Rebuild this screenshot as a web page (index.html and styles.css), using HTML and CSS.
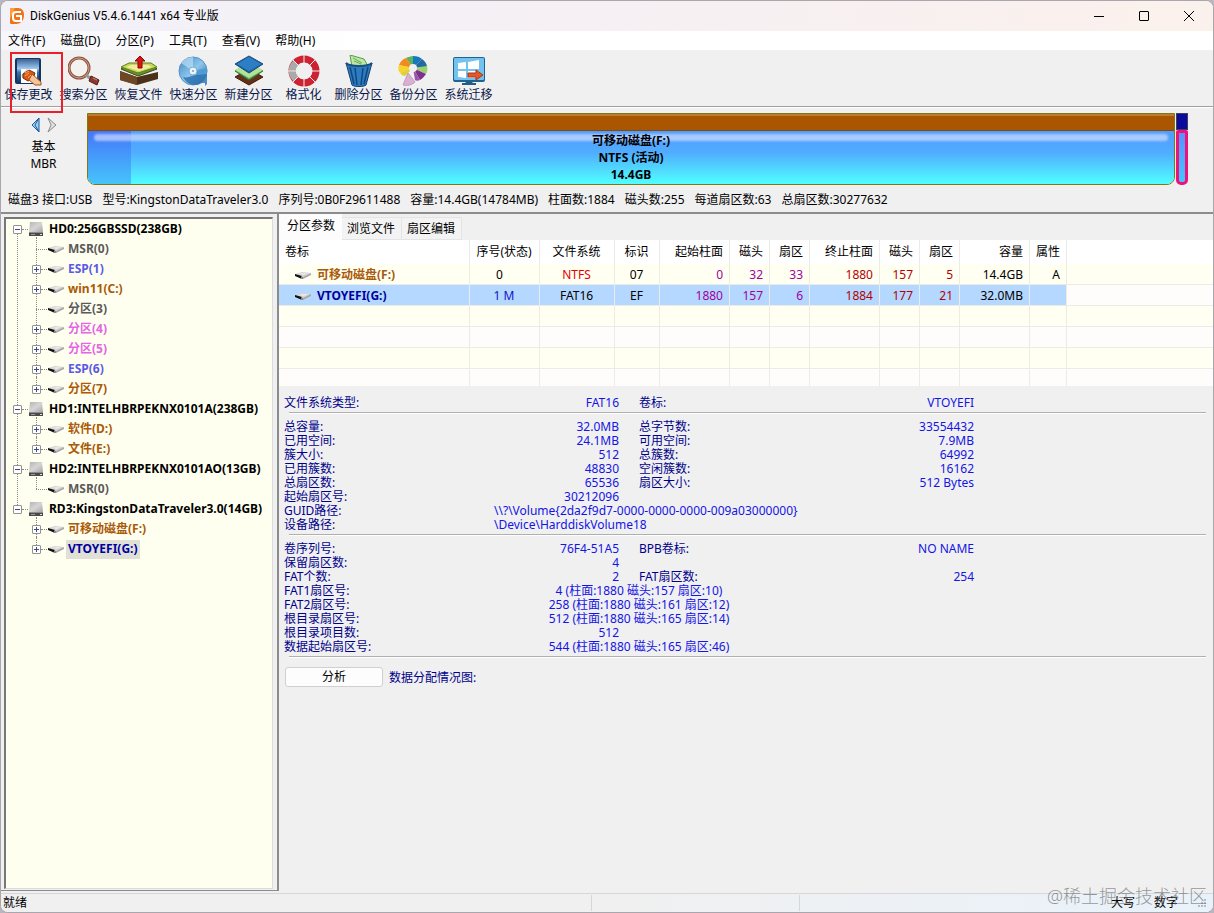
FILE: index.html
```html
<!DOCTYPE html>
<html lang="zh-CN">
<head>
  <meta charset="UTF-8" />
  <meta name="viewport" content="width=device-width, initial-scale=1" />
  <title>DiskGenius V5.4.6.1441 x64 专业版</title>
  <link rel="stylesheet" href="styles.css">
</head>
<body>
  <!-- shared icons -->
  <svg class="sprite" aria-hidden="true">
    <defs>
      <linearGradient id="metal" x1="0" y1="0" x2="1" y2="1">
        <stop offset="0" stop-color="#b4b4b4" />
        <stop offset="0.5" stop-color="#d6d6d6" />
        <stop offset="1" stop-color="#a6a6a6" />
      </linearGradient>
    </defs>
    <symbol id="disk" viewBox="0 0 16 16">
      <path d="M2 1h12l1 10H1z" fill="url(#metal)" />
      <path d="M1 11h14v4H1z" fill="#4a4a4a" />
      <path d="M1 11h14v1H1z" fill="#8c8c8c" />
      <path d="M3 13h4v1H3z" fill="#999" />
      <path d="M12 13h2v1h-2z" fill="#ddd" />
    </symbol>
    <symbol id="part" viewBox="0 0 18 10">
      <path d="M1 4l7-2 9 1-7 4z" fill="#d4d4d4" />
      <path d="M9 7l8-4v2l-8 4z" fill="#a8a8a8" />
      <path d="M1 4l7 2v3L1 6z" fill="#111" />
      <path d="M7 6l2 1v2H7z" fill="#8a8a8a" />
      <path d="M4 4l5-1 5 0-4 2z" fill="#e9e9e9" />
    </symbol>
  </svg>

  <div class="window">
    <header class="titlebar">
      <svg class="logo" viewBox="0 0 16 18">
        <path d="M1 1h8c4 0 6 3 6 7 0 5-3 9-8 9H2c-1 0-1-1-1-2z" fill="#f47216" />
        <path d="M1 1h5L1 12z" fill="#ff9c3e" />
        <path d="M12 5H7C5 5 4 6 4 8v3c0 2 1 3 3 3h5V9H7" fill="none" stroke="#fff" stroke-width="2" />
      </svg>
      <h1>DiskGenius V5.4.6.1441 x64 专业版</h1>
      <div class="window-buttons">
        <button aria-label="最小化"><svg viewBox="0 0 10 10"><path d="M0 5.5h10" /></svg></button>
        <button aria-label="最大化"><svg viewBox="0 0 10 10"><rect x="0.5" y="0.5" width="9" height="9" rx="0.5" /></svg></button>
        <button aria-label="关闭"><svg viewBox="0 0 10 10"><path d="M0 0l10 10M10 0L0 10" /></svg></button>
      </div>
    </header>

    <nav class="menubar">
      <button>文件(F)</button>
      <button>磁盘(D)</button>
      <button>分区(P)</button>
      <button>工具(T)</button>
      <button>查看(V)</button>
      <button>帮助(H)</button>
    </nav>

    <div class="toolbar">
      <button class="tool marked">
        <svg viewBox="0 0 32 32">
          <defs><linearGradient id="save" x1="0" y1="0" x2="0" y2="1"><stop offset="0" stop-color="#3b6196" /><stop offset="0.4" stop-color="#9cc8f0" /><stop offset="0.55" stop-color="#3d74b0" /><stop offset="1" stop-color="#0c3562" /></linearGradient></defs>
          <rect x="2" y="3" width="26" height="26" rx="2" fill="#12365f" />
          <rect x="4" y="4" width="22" height="24" fill="url(#save)" />
          <path d="M8 14h16v14H8z" fill="#fff" />
          <path d="M8 20l6-6 3 3-7 7z" fill="#c8d4e0" />
          <path d="M10 19l6-4 6 3-2 6-5 2-5-3z" fill="#d85a14" stroke="#7c2a06" />
          <path d="M19 19l9 8v3h-6l-6-5z" fill="#f6c496" stroke="#a2501e" />
          <path d="M12 18l4-2M12 21l4-3M15 23l3-3" stroke="#ffa664" />
        </svg>
        <span>保存更改</span>
      </button>
      <button class="tool">
        <svg viewBox="0 0 32 32">
          <circle cx="11" cy="13" r="10" fill="#f6f3ef" fill-opacity="0.6" stroke="#8f5443" stroke-width="3" />
          <circle cx="11" cy="13" r="10" fill="none" stroke="#cf9c88" />
          <path d="M18 20l5 4" stroke="#999" stroke-width="3" />
          <path d="M23 21l8 4-2 5-8-4z" fill="#8c3b2b" stroke="#4e1b13" />
          <path d="M25 23l4 2" stroke="#cf8877" />
        </svg>
        <span>搜索分区</span>
      </button>
      <button class="tool">
        <svg class="wide" viewBox="0 0 40 32">
          <path d="M1 16l17 6 21-5v7l-21 6-17-5z" fill="#4c2f18" />
          <path d="M1 16l17 6v8L1 25z" fill="#6d4726" />
          <path d="M2 14l8-5h22l6 5-19 7z" fill="#6b8e2c" stroke="#34520f" />
          <path d="M2 12l8-4h22l6 4-19 6z" fill="#c3d958" stroke="#5e7e1c" />
          <path d="M7 12l5-2h17l4 2-13 4z" fill="#f3eba2" />
          <path d="M19 13V6h-3l5-5 5 5h-3v7z" fill="#dd1414" stroke="#8e0606" />
        </svg>
        <span>恢复文件</span>
      </button>
      <button class="tool">
        <svg viewBox="0 0 32 32">
          <defs><linearGradient id="cd" x1="0" y1="0" x2="1" y2="1"><stop offset="0" stop-color="#3f86c2" /><stop offset="0.5" stop-color="#8dc6ec" /><stop offset="1" stop-color="#2768a6" /></linearGradient></defs>
          <circle cx="15" cy="16" r="14" fill="url(#cd)" stroke="#5a94c4" />
          <path d="M15 16L3 8C6 4 10 2 15 2z" fill="#b9def4" opacity="0.7" />
          <path d="M15 16l14-3c1 5-1 10-5 13z" fill="#4f9ad0" />
          <circle cx="15" cy="16" r="4" fill="#e9f3fa" stroke="#81acd0" />
          <circle cx="15" cy="16" r="1" fill="#6aa5d2" />
          <path d="M5 22c6 2 11-3 16-2l8-1v10l-2 2v-3h-3c-6 4-15 2-19-6z" fill="#2b72b0" opacity="0.8" />
        </svg>
        <span>快速分区</span>
      </button>
      <button class="tool">
        <svg viewBox="0 0 32 32">
          <path d="M2 22l14-8 14 8-14 8z" fill="#653018" stroke="#441b0b" />
          <path d="M2 16l14-8 14 8-14 9z" fill="#5da967" stroke="#2c7337" />
          <path d="M2 15l14-8 14 8-14 8z" fill="#b3e494" />
          <path d="M2 9l14-8 14 8-14 9z" fill="#1e63a5" stroke="#194a82" />
          <path d="M4 9l12-7 12 7-12 7z" fill="#2c7fc4" />
        </svg>
        <span>新建分区</span>
      </button>
      <button class="tool">
        <svg viewBox="0 0 32 32">
          <circle cx="16" cy="16" r="12" fill="none" stroke="#cc2231" stroke-width="7" />
          <path d="M4 16A12 12 0 0 1 8 8M4 16A12 12 0 0 0 8 24" fill="none" stroke="#aaa" stroke-width="7" />
          <path d="M16 0v32M0 16h32M4 4l24 24M28 4L4 28" stroke="#f0f0f0" stroke-width="1" />
          <circle cx="16" cy="16" r="8" fill="#f0f0f0" />
        </svg>
        <span>格式化</span>
      </button>
      <button class="tool">
        <svg viewBox="0 0 32 32">
          <path d="M7 0l14 4 4 7-16 1z" fill="#bce8a3" stroke="#559c4b" />
          <path d="M10 3l9 5M11 6l7 3" stroke="#6aa95c" />
          <path d="M3 8c4 4 22 4 26 0l-6 22c-2 2-12 2-14 0z" fill="#2d7cc2" stroke="#11406e" />
          <path d="M7 12l4 17M12 13l2 17M20 13l-2 17M25 12l-4 17" stroke="#12477c" stroke-width="1.5" />
          <path d="M3 8c4 4 22 4 26 0" fill="none" stroke="#194f83" stroke-width="2" />
        </svg>
        <span>删除分区</span>
      </button>
      <button class="tool">
        <svg viewBox="0 0 32 32">
          <path d="M15 13L8 3c2-1 5-2 7-2z" fill="#5cb35c" />
          <path d="M15 13V1c4 0 7 1 9 3z" fill="#1579bd" />
          <path d="M15 13l9-9c3 2 5 5 5 8z" fill="#2468a4" />
          <path d="M15 13l14-2c1 3 0 6-1 8z" fill="#9bd16d" />
          <path d="M15 13l13 6c-2 3-4 5-6 6z" fill="#7e308f" />
          <path d="M15 13l7 12c-2 1-4 1-5 0z" fill="#9a55a6" />
          <path d="M15 13L8 3C5 4 2 7 1 10z" fill="#f38a1e" />
          <path d="M15 13L1 10c-1 3-1 5 1 8z" fill="#f5d52a" />
          <path d="M15 13L2 18c2 2 3 3 5 3z" fill="#dfcf35" />
          <circle cx="15" cy="13" r="4" fill="#f0f0f0" />
          <path d="M10 18l7 9c-3 3-8 4-12 3z" fill="#d9b0d2" stroke="#c49abd" />
        </svg>
        <span>备份分区</span>
      </button>
      <button class="tool">
        <svg viewBox="0 0 32 32">
          <rect x="0" y="2" width="32" height="25" rx="2" fill="#1f6292" />
          <rect x="1" y="3" width="30" height="22" rx="1" fill="#72c3ef" />
          <path d="M5 8l8-1v7H5zM15 7l11-2v9H15zM5 16h8v7l-8-1zM15 16h11v7H15z" fill="#fff" />
          <path d="M13 27h6l1 1h3v2H9v-2h3z" fill="#245c84" />
          <path d="M15 18h8v-3l7 5-7 5v-3h-8z" fill="#e4582b" stroke="#b03514" />
        </svg>
        <span>系统迁移</span>
      </button>
    </div>

    <section class="disk-panel">
      <div class="disk-map">
        <div class="disk-nav">
          <div class="arrows">
            <button aria-label="上一个磁盘"><svg viewBox="0 0 10 16"><path d="M8 1v14L1 8z" fill="#9cd2f8" stroke="#1c5d9c" /><path d="M8 1L4 8l4 7" fill="none" stroke="#1c5d9c" /></svg></button>
            <button aria-label="下一个磁盘"><svg viewBox="0 0 10 16"><path d="M1 1l8 7-8 7 3-7z" fill="#dedede" stroke="#8c8c8c" /></svg></button>
          </div>
          <span>基本</span>
          <span>MBR</span>
        </div>
        <div class="volume">
          <div class="volume-cap"></div>
          <div class="volume-body">
            <div class="volume-used"></div>
            <div class="volume-shine"></div>
            <div class="volume-text">
              <span>可移动磁盘(F:)</span>
              <span>NTFS (活动)</span>
              <span>14.4GB</span>
            </div>
          </div>
        </div>
        <div class="volume-small">
          <div class="small-cap"></div>
          <div class="small-body"></div>
        </div>
      </div>
      <p class="disk-info">
        <span>磁盘3 接口:USB</span>
        <span>型号:KingstonDataTraveler3.0</span>
        <span>序列号:0B0F29611488</span>
        <span>容量:14.4GB(14784MB)</span>
        <span>柱面数:1884</span>
        <span>磁头数:255</span>
        <span>每道扇区数:63</span>
        <span>总扇区数:30277632</span>
      </p>
    </section>

    <main class="main">
      <aside class="tree-panel">
        <ul class="tree">
          <li>
            <div class="node"><button class="toggle open" aria-label="折叠"></button><i></i><svg class="disk"><use href="#disk" /></svg><span>HD0:256GBSSD(238GB)</span></div>
            <ul>
              <li><div class="node"><i class="long"></i><svg class="part"><use href="#part" /></svg><span class="gray">MSR(0)</span></div></li>
              <li><div class="node"><button class="toggle" aria-label="展开"></button><i></i><svg class="part"><use href="#part" /></svg><span class="violet">ESP(1)</span></div></li>
              <li><div class="node"><button class="toggle" aria-label="展开"></button><i></i><svg class="part"><use href="#part" /></svg><span class="brown">win11(C:)</span></div></li>
              <li><div class="node"><i class="long"></i><svg class="part"><use href="#part" /></svg><span class="gray">分区(3)</span></div></li>
              <li><div class="node"><button class="toggle" aria-label="展开"></button><i></i><svg class="part"><use href="#part" /></svg><span class="pink">分区(4)</span></div></li>
              <li><div class="node"><button class="toggle" aria-label="展开"></button><i></i><svg class="part"><use href="#part" /></svg><span class="pink">分区(5)</span></div></li>
              <li><div class="node"><button class="toggle" aria-label="展开"></button><i></i><svg class="part"><use href="#part" /></svg><span class="violet">ESP(6)</span></div></li>
              <li><div class="node"><button class="toggle" aria-label="展开"></button><i></i><svg class="part"><use href="#part" /></svg><span class="brown">分区(7)</span></div></li>
            </ul>
          </li>
          <li>
            <div class="node"><button class="toggle open" aria-label="折叠"></button><i></i><svg class="disk"><use href="#disk" /></svg><span>HD1:INTELHBRPEKNX0101A(238GB)</span></div>
            <ul>
              <li><div class="node"><button class="toggle" aria-label="展开"></button><i></i><svg class="part"><use href="#part" /></svg><span class="brown">软件(D:)</span></div></li>
              <li><div class="node"><button class="toggle" aria-label="展开"></button><i></i><svg class="part"><use href="#part" /></svg><span class="brown">文件(E:)</span></div></li>
            </ul>
          </li>
          <li>
            <div class="node"><button class="toggle open" aria-label="折叠"></button><i></i><svg class="disk"><use href="#disk" /></svg><span>HD2:INTELHBRPEKNX0101AO(13GB)</span></div>
            <ul>
              <li><div class="node"><i class="long"></i><svg class="part"><use href="#part" /></svg><span class="gray">MSR(0)</span></div></li>
            </ul>
          </li>
          <li>
            <div class="node"><button class="toggle open" aria-label="折叠"></button><i></i><svg class="disk"><use href="#disk" /></svg><span>RD3:KingstonDataTraveler3.0(14GB)</span></div>
            <ul>
              <li><div class="node"><button class="toggle" aria-label="展开"></button><i></i><svg class="part"><use href="#part" /></svg><span class="brown">可移动磁盘(F:)</span></div></li>
              <li><div class="node"><button class="toggle" aria-label="展开"></button><i></i><svg class="part"><use href="#part" /></svg><span class="navy selected">VTOYEFI(G:)</span></div></li>
            </ul>
          </li>
        </ul>
      </aside>

      <section class="content">
        <div class="tabs">
          <button class="tab active">分区参数</button>
          <button class="tab">浏览文件</button>
          <button class="tab">扇区编辑</button>
        </div>

        <table class="partitions">
          <colgroup>
            <col class="w191"><col class="w70"><col class="w75"><col class="w45"><col class="w70"><col class="w40"><col class="w40"><col class="w70"><col class="w40"><col class="w40"><col class="w70"><col class="w37"><col>
          </colgroup>
          <thead>
            <tr>
              <th class="name">卷标</th><th class="mid">序号(状态)</th><th class="mid">文件系统</th><th class="mid">标识</th><th>起始柱面</th><th>磁头</th><th>扇区</th><th>终止柱面</th><th>磁头</th><th>扇区</th><th>容量</th><th>属性</th><th></th>
            </tr>
          </thead>
          <tbody>
            <tr>
              <td class="name"><div class="vol"><svg class="part"><use href="#part" /></svg><span class="brown">可移动磁盘(F:)</span></div></td>
              <td class="mid">0&nbsp;&nbsp;&nbsp;</td><td class="mid red">NTFS</td><td class="mid">07</td>
              <td class="purple">0</td><td class="purple">32</td><td class="purple">33</td>
              <td class="dark-red">1880</td><td class="dark-red">157</td><td class="dark-red">5</td>
              <td>14.4GB</td><td>A</td><td></td>
            </tr>
            <tr class="current">
              <td class="name"><div class="vol"><svg class="part"><use href="#part" /></svg><span class="navy">VTOYEFI(G:)</span></div></td>
              <td class="mid blue">1 M</td><td class="mid">FAT16</td><td class="mid">EF</td>
              <td class="purple">1880</td><td class="purple">157</td><td class="purple">6</td>
              <td class="dark-red">1884</td><td class="dark-red">177</td><td class="dark-red">21</td>
              <td>32.0MB</td><td></td><td></td>
            </tr>
            <tr><td></td><td></td><td></td><td></td><td></td><td></td><td></td><td></td><td></td><td></td><td></td><td></td><td></td></tr>
            <tr><td></td><td></td><td></td><td></td><td></td><td></td><td></td><td></td><td></td><td></td><td></td><td></td><td></td></tr>
            <tr><td></td><td></td><td></td><td></td><td></td><td></td><td></td><td></td><td></td><td></td><td></td><td></td><td></td></tr>
            <tr class="last"><td></td><td></td><td></td><td></td><td></td><td></td><td></td><td></td><td></td><td></td><td></td><td></td><td></td></tr>
          </tbody>
        </table>

        <div class="details">
          <dl class="block">
            <dt>文件系统类型:</dt><dd>FAT16</dd><dt class="second">卷标:</dt><dd>VTOYEFI</dd>
          </dl>
          <dl class="block">
            <dt>总容量:</dt><dd>32.0MB</dd><dt class="second">总字节数:</dt><dd>33554432</dd>
            <dt>已用空间:</dt><dd>24.1MB</dd><dt class="second">可用空间:</dt><dd>7.9MB</dd>
            <dt>簇大小:</dt><dd>512</dd><dt class="second">总簇数:</dt><dd>64992</dd>
            <dt>已用簇数:</dt><dd>48830</dd><dt class="second">空闲簇数:</dt><dd>16162</dd>
            <dt>总扇区数:</dt><dd>65536</dd><dt class="second">扇区大小:</dt><dd>512 Bytes</dd>
            <dt>起始扇区号:</dt><dd>30212096</dd>
            <dt>GUID路径:</dt><dd class="path">\\?\Volume{2da2f9d7-0000-0000-0000-009a03000000}</dd>
            <dt>设备路径:</dt><dd class="path">\Device\HarddiskVolume18</dd>
          </dl>
          <dl class="block">
            <dt>卷序列号:</dt><dd>76F4-51A5</dd><dt class="second">BPB卷标:</dt><dd>NO NAME</dd>
            <dt>保留扇区数:</dt><dd>4</dd>
            <dt>FAT个数:</dt><dd>2</dd><dt class="second">FAT扇区数:</dt><dd>254</dd>
            <dt>FAT1扇区号:</dt><dd class="chs">4 (柱面:1880 磁头:157 扇区:10)</dd>
            <dt>FAT2扇区号:</dt><dd class="chs">258 (柱面:1880 磁头:161 扇区:12)</dd>
            <dt>根目录扇区号:</dt><dd class="chs">512 (柱面:1880 磁头:165 扇区:14)</dd>
            <dt>根目录项目数:</dt><dd>512</dd>
            <dt>数据起始扇区号:</dt><dd class="chs">544 (柱面:1880 磁头:165 扇区:46)</dd>
          </dl>
          <div class="analyze">
            <button>分析</button>
            <span>数据分配情况图:</span>
          </div>
        </div>
      </section>
    </main>

    <footer class="statusbar">
      <span class="ready">就绪</span>
      <span class="cell"></span>
      <span class="cell"></span>
      <span class="key">大写</span>
      <span class="key">数字</span>
      <svg class="grip" viewBox="0 0 10 10"><path d="M7 1h2v2H7zM7 4h2v2H7zM7 7h2v2H7zM4 4h2v2H4zM4 7h2v2H4zM1 7h2v2H1z" /></svg>
    </footer>
    <div class="watermark">@稀土掘金技术社区</div>
  </div>
</body>
</html>
```
FILE: styles.css
```css
*,
*::before,
*::after {
  box-sizing: border-box;
}

body {
  margin: 0;
  background: #b9b6bd;
  color: #000;
  font-family: "Noto Sans", "Noto Sans CJK SC", sans-serif;
  font-size: 12px;
  line-height: 16px;
}

button {
  font: inherit;
  color: inherit;
  border: none;
  background: none;
  padding: 0;
  cursor: pointer;
}

ul,
dl,
dd,
p,
h1 {
  margin: 0;
  padding: 0;
}

.sprite {
  position: absolute;
  width: 0;
  height: 0;
}

.window {
  position: relative;
  display: flex;
  flex-direction: column;
  min-height: 100vh;
  background: #f0f0f0;
  border: 1px solid #a9a6ad;
  border-radius: 8px;
  overflow: hidden;
}

/* title bar */
.titlebar {
  display: flex;
  align-items: center;
  height: 30px;
  padding: 0 2px 0 8px;
  background: linear-gradient(to right, #f2f1f8, #f6f0f4 50%, #fbf1ec);
}

.logo {
  width: 16px;
  height: 18px;
}

.titlebar h1 {
  flex: 1;
  margin-left: 5px;
  font-family: Roboto, "Noto Sans CJK SC", sans-serif;
  font-size: 12px;
  font-weight: 400;
}

.window-buttons {
  display: flex;
}

.window-buttons button {
  width: 45px;
  height: 28px;
}

.window-buttons svg {
  display: block;
  width: 10px;
  height: 10px;
  margin: 0 auto;
  overflow: visible;
  fill: none;
  stroke: #000;
}

/* menu and toolbar */
.menubar {
  display: flex;
  gap: 15px;
  height: 19px;
  padding-left: 7px;
  background: linear-gradient(to right, #f7f6fa, #fff 30%);
}

.toolbar {
  display: flex;
  height: 57px;
  border-bottom: 1px solid #a0a0a0;
}

.tool {
  position: relative;
  display: flex;
  flex-direction: column;
  align-items: center;
  width: 55px;
  padding-top: 5px;
  color: #0a1648;
  white-space: nowrap;
}

.tool svg {
  width: 32px;
  height: 32px;
}

.tool svg.wide {
  width: 40px;
}

.marked {
  z-index: 1;
}

.marked::after {
  content: "";
  position: absolute;
  left: 9px;
  top: 2px;
  width: 53px;
  height: 61px;
  border: 2px solid #e8202a;
}

/* disk map */
.disk-panel {
  border-top: 1px solid #fff;
  border-bottom: 2px solid #8c8c8c;
}

.disk-map {
  display: flex;
  gap: 1px;
  padding: 5px 25px 0 0;
}

.disk-nav {
  display: flex;
  flex-direction: column;
  align-items: center;
  width: 85px;
  line-height: 17px;
}

.arrows {
  display: flex;
  gap: 6px;
  height: 25px;
  padding-top: 4px;
}

.arrows button {
  height: 16px;
}

.arrows svg {
  display: block;
  width: 10px;
  height: 16px;
}

.volume {
  flex: 1;
  display: flex;
  flex-direction: column;
  height: 72px;
  border: 1px solid #7d7a10;
  border-radius: 0 0 8px 8px;
  overflow: hidden;
}

.volume-cap {
  height: 17px;
  background: #aa5500;
  border-top: 2px solid #c07a34;
  border-bottom: 1px solid #7a4d12;
}

.volume-body {
  position: relative;
  flex: 1;
  background: linear-gradient(to bottom, #529cff, #50acff 40%, #50ffff);
}

.volume-used {
  position: absolute;
  left: 0;
  top: 0;
  bottom: 0;
  width: 4%;
  background: linear-gradient(to bottom, #4476fa, #46c4fb);
}

.volume-shine {
  position: absolute;
  left: 6px;
  right: 6px;
  top: 3px;
  height: 7px;
  border-radius: 4px;
  background: rgba(215, 225, 255, 0.65);
  filter: blur(1px);
}

.volume-text {
  position: relative;
  display: flex;
  flex-direction: column;
  align-items: center;
  padding-top: 1px;
  line-height: 17px;
  font-weight: 700;
}

.volume-small {
  display: flex;
  flex-direction: column;
  width: 12px;
  height: 72px;
}

.small-cap {
  height: 17px;
  background: #0a0a9c;
  border: 1px solid #40405c;
}

.small-body {
  flex: 1;
  border: 3px solid #f0107c;
  border-radius: 2px 2px 5px 5px;
  background: linear-gradient(to bottom, #5a90ff, #40c8ff);
}

.disk-info {
  display: flex;
  gap: 10px;
  padding: 7px 7px 4px;
  white-space: nowrap;
}

/* main area */
.main {
  flex: 1;
  display: flex;
}

.tree-panel {
  width: 278px;
  padding: 3px 4px 1px 3px;
  border-right: 2px solid #8c8c8c;
  border-bottom: 1px solid #8c8c8c;
}

.tree {
  height: 100%;
  padding-left: 7px;
  background: #ffffef;
  border: 1px solid #dcdcdc;
  border-top: 2px solid #777;
  border-left: 2px solid #777;
  font-weight: 700;
}

.tree ul {
  padding-left: 19px;
}

.tree li {
  position: relative;
  list-style: none;
}

/* connector line down to the next sibling */
.tree li::before {
  content: "";
  position: absolute;
  left: 4px;
  top: 10px;
  bottom: -10px;
  border-left: 1px dotted #888;
}

.tree li:last-child::before {
  display: none;
}

.tree ul li:first-child::after,
.tree ul li:last-child::after {
  content: "";
  position: absolute;
  left: 4px;
  top: -2px;
  height: 12px;
  border-left: 1px dotted #888;
}

.node {
  position: relative;
  z-index: 1;
  display: flex;
  align-items: center;
  height: 20px;
  white-space: nowrap;
}

.node span {
  margin-left: 3px;
  padding: 1px 2px 2px;
}

.node i {
  width: 6px;
  border-top: 1px dotted #888;
}

.node i.long {
  width: 11px;
  margin-left: 4px;
}

.toggle {
  width: 9px;
  height: 9px;
  border: 1px solid #919191;
  border-radius: 1px;
  background:
    linear-gradient(#3a4a8c, #3a4a8c) center / 5px 1px no-repeat,
    linear-gradient(#3a4a8c, #3a4a8c) center / 1px 5px no-repeat,
    #fff;
}

.toggle.open {
  background:
    linear-gradient(#3a4a8c, #3a4a8c) center / 5px 1px no-repeat,
    #fff;
}

svg.disk {
  width: 16px;
  height: 16px;
}

svg.part {
  width: 18px;
  height: 10px;
}

.tree ul .node span {
  margin-left: 1px;
}

.node .selected {
  background: #e1e0d6;
}

.gray {
  color: #5a5a5a;
}

.violet {
  color: #5a5ae6;
}

.brown {
  color: #aa5a0a;
}

.pink {
  color: #e664e6;
}

.navy {
  color: #0000a0;
}

.red {
  color: #e60000;
}

.blue {
  color: #1414c8;
}

.purple {
  color: #a000a0;
}

.dark-red {
  color: #b40000;
}

/* right side */
.content {
  flex: 1;
  min-width: 0;
}

.tabs {
  display: flex;
  align-items: flex-end;
  height: 26px;
}

.tab {
  height: 23px;
  padding: 0 6px 0 5px;
  border: 1px solid #e4e4e4;
  border-left: none;
  background: #f3f3f3;
}

.tab.active {
  height: 26px;
  padding: 0 7px 3px 8px;
  border: none;
  background: #fcfcfc;
}

.partitions {
  width: 100%;
  table-layout: fixed;
  border-collapse: separate;
  border-spacing: 0;
}

.w191 { width: 191px; }
.w75 { width: 75px; }
.w70 { width: 70px; }
.w45 { width: 45px; }
.w40 { width: 40px; }
.w37 { width: 37px; }

.partitions th,
.partitions td {
  height: 21px;
  padding: 2px 6px 0 0;
  text-align: right;
  white-space: nowrap;
  border-right: 1px solid #ecebe6;
  border-bottom: 1px solid #ecebe6;
}

.partitions th {
  height: 24px;
  padding-top: 0;
  font-weight: 400;
  background: #fff;
  border-bottom: none;
}

.partitions .mid {
  padding-right: 1px;
  text-align: center;
}

.partitions .name {
  padding-left: 6px;
  text-align: left;
}

.partitions th:last-child,
.partitions td:last-child {
  border-right: none;
}

.partitions tbody tr {
  background: #fffdfb;
}

.partitions tbody tr:nth-child(odd) {
  background: #fffff2;
}

.current td:not(:last-child) {
  background: #b4d8ff;
}

.partitions .last td {
  height: 17px;
  border-bottom: none;
}

.vol {
  display: flex;
  align-items: center;
  gap: 5px;
  padding-left: 9px;
  font-weight: 700;
}

.details {
  padding: 8px 7px 0 5px;
}

.block {
  display: grid;
  grid-template-columns: 205px 125px 20px 145px 190px;
  margin: 0 0 1px 5px;
  padding: 6px 0 2px;
  line-height: 14px;
  white-space: nowrap;
  color: #00008b;
  border-bottom: 1px solid #b0b0b0;
  box-shadow: 0 1px #fff;
}

.block:first-child {
  padding-top: 2px;
}

dt {
  grid-column: 1;
  margin-left: -5px;
}

dt.second {
  grid-column: 4;
  margin-left: 0;
}

dd {
  text-align: right;
  color: #1414e6;
}

dd.path {
  grid-column: 2 / -1;
  text-align: left;
}

dd.chs {
  grid-column: 2 / 5;
  text-align: center;
}

.analyze {
  display: flex;
  align-items: center;
  gap: 6px;
  padding: 9px 1px;
  color: #00008b;
}

.analyze button {
  width: 98px;
  height: 20px;
  color: #000;
  background: #fdfdfd;
  border: 1px solid #d0d0d0;
  border-radius: 3px;
}

.analyze span {
  padding-top: 2px;
}

/* status bar */
.statusbar {
  display: flex;
  align-items: center;
  height: 19px;
  margin-top: 2px;
  padding-left: 2px;
  border-top: 1px solid #d7d7d7;
  background: linear-gradient(to right, #f0f0f0 50%, #e9f2fa);
}

.statusbar .ready {
  flex: 1;
}

.cell {
  width: 208px;
  height: 16px;
  border-left: 1px solid #d7d7d7;
}

.cell + .cell {
  width: 312px;
}

.key {
  width: 43px;
}

.grip {
  width: 10px;
  height: 10px;
  margin-right: 6px;
  fill: #b4bcc4;
}

.watermark {
  position: absolute;
  right: 6px;
  bottom: 4px;
  font-size: 18px;
  line-height: 24px;
  font-weight: 300;
  color: rgba(110, 110, 110, 0.7);
  pointer-events: none;
}
```
